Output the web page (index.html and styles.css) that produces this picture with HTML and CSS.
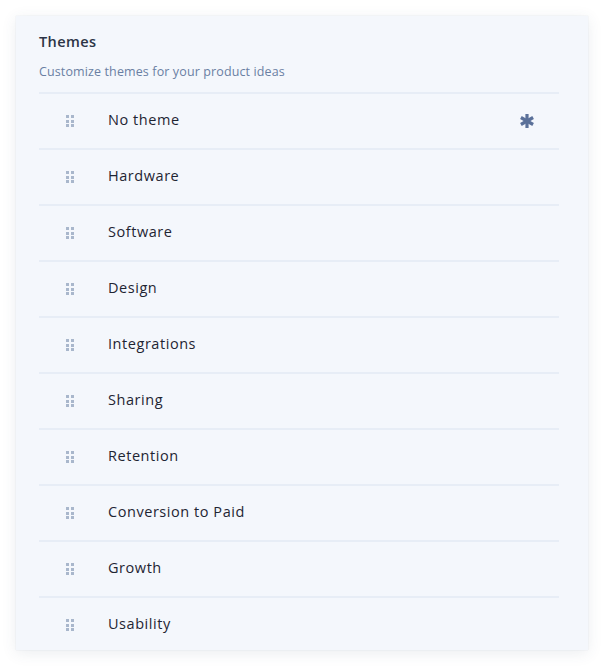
FILE: index.html
```html
<!DOCTYPE html>
<html>
<head>
<meta charset="utf-8">
<link rel="stylesheet" href="styles.css">
</head>
<body>
<div class="card">
  <div class="header">
    <h1 class="title">Themes</h1>
    <p class="subtitle">Customize themes for your product ideas</p>
  </div>
  <ul class="list">
    <li class="row"><span class="handle"><i></i><i></i><i></i><i></i><i></i><i></i></span><span class="label">No theme</span>
      <svg class="star" viewBox="0 0 16 16" width="16" height="16"><g stroke="#5a7099" stroke-width="3.2" stroke-linecap="butt"><line x1="8" y1="1" x2="8" y2="15"/><line x1="1.9" y1="4.5" x2="14.1" y2="11.5"/><line x1="1.9" y1="11.5" x2="14.1" y2="4.5"/></g></svg>
    </li>
    <li class="row"><span class="handle"><i></i><i></i><i></i><i></i><i></i><i></i></span><span class="label">Hardware</span></li>
    <li class="row"><span class="handle"><i></i><i></i><i></i><i></i><i></i><i></i></span><span class="label">Software</span></li>
    <li class="row"><span class="handle"><i></i><i></i><i></i><i></i><i></i><i></i></span><span class="label">Design</span></li>
    <li class="row"><span class="handle"><i></i><i></i><i></i><i></i><i></i><i></i></span><span class="label">Integrations</span></li>
    <li class="row"><span class="handle"><i></i><i></i><i></i><i></i><i></i><i></i></span><span class="label">Sharing</span></li>
    <li class="row"><span class="handle"><i></i><i></i><i></i><i></i><i></i><i></i></span><span class="label">Retention</span></li>
    <li class="row"><span class="handle"><i></i><i></i><i></i><i></i><i></i><i></i></span><span class="label">Conversion to Paid</span></li>
    <li class="row"><span class="handle"><i></i><i></i><i></i><i></i><i></i><i></i></span><span class="label">Growth</span></li>
    <li class="row"><span class="handle"><i></i><i></i><i></i><i></i><i></i><i></i></span><span class="label">Usability</span></li>
  </ul>
</div>
</body>
</html>
```
FILE: styles.css
```css
html, body {
  margin: 0;
  background: #ffffff;
}
body {
  padding: 16px;
  font-family: "Open Sans", "Liberation Sans", sans-serif;
  color: #1f2533;
}
.card {
  width: 572px;
  height: 634px;
  box-sizing: border-box;
  background: #f4f7fc;
  padding: 0 29px 0 23px;
  box-shadow: 0 0 1px rgba(60, 80, 110, 0.18), 0 3px 14px rgba(60, 80, 110, 0.10);
}
.header {
  height: 76px;
  box-sizing: border-box;
  padding-top: 16px;
}
.title {
  margin: 0;
  font-size: 14.5px;
  font-weight: 600;
  line-height: 20px;
  letter-spacing: 0.4px;
  color: #2c3446;
}
.subtitle {
  margin: 11px 0 0;
  font-size: 12.5px;
  line-height: 17px;
  letter-spacing: 0.12px;
  color: #6a7fa3;
}
.list {
  list-style: none;
  margin: 0;
  padding: 0;
}
.row {
  height: 56px;
  box-sizing: border-box;
  border-top: 2px solid #e7edf6;
  display: flex;
  align-items: center;
  padding-left: 27px;
  padding-right: 24px;
}
.handle {
  display: grid;
  grid-template-columns: 3px 3px;
  grid-auto-rows: 3px;
  column-gap: 2px;
  row-gap: 1.5px;
  width: 8px;
}
.handle i {
  display: block;
  background: #a9b7cc;
}
.label {
  margin-left: 34px;
  font-size: 14.5px;
  line-height: 20px;
  margin-top: -2px;
  letter-spacing: 0.55px;
  color: #1f2533;
}
.star {
  margin-left: auto;
}
```
